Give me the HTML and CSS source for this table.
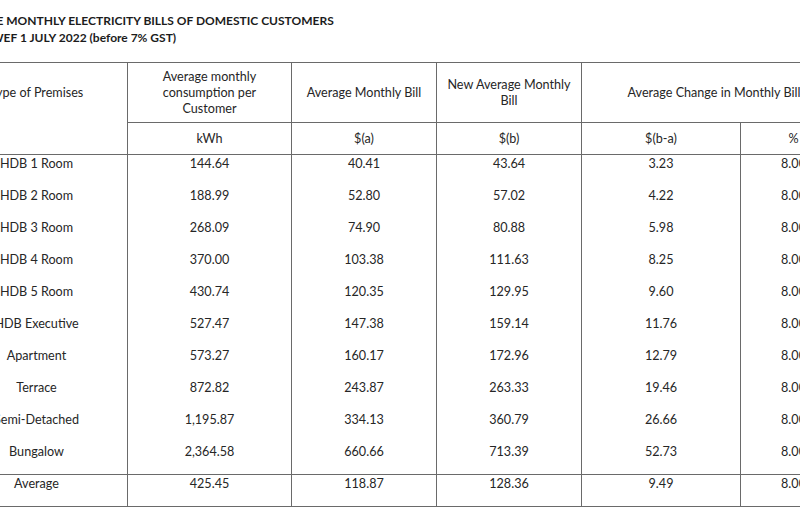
FILE: index.html
```html
<!DOCTYPE html>
<html lang="en">
<head>
<meta charset="utf-8">
<title>Average Monthly Electricity Bills</title>
<link rel="stylesheet" href="styles.css">
</head>
<body>
<div class="doc">
  <div class="title">
    <div class="t1">AVERAGE MONTHLY ELECTRICITY BILLS OF DOMESTIC CUSTOMERS</div>
    <div class="t2">WEF 1 JULY 2022 (before 7% GST)</div>
  </div>
  <table class="bills">
    <colgroup>
      <col class="c1"><col class="c2"><col class="c3"><col class="c4"><col class="c5"><col class="c6">
    </colgroup>
    <thead>
      <tr class="h1">
        <th rowspan="2" class="type">Type of Premises</th>
        <th>Average monthly<br>consumption per<br>Customer</th>
        <th>Average Monthly Bill</th>
        <th>New Average Monthly<br>Bill</th>
        <th colspan="2">Average Change in Monthly Bill</th>
      </tr>
      <tr class="h2">
        <th>kWh</th>
        <th>$(a)</th>
        <th>$(b)</th>
        <th>$(b-a)</th>
        <th>%</th>
      </tr>
    </thead>
    <tbody>
      <tr><td>HDB 1 Room</td><td>144.64</td><td>40.41</td><td>43.64</td><td>3.23</td><td>8.00</td></tr>
      <tr><td>HDB 2 Room</td><td>188.99</td><td>52.80</td><td>57.02</td><td>4.22</td><td>8.00</td></tr>
      <tr><td>HDB 3 Room</td><td>268.09</td><td>74.90</td><td>80.88</td><td>5.98</td><td>8.00</td></tr>
      <tr><td>HDB 4 Room</td><td>370.00</td><td>103.38</td><td>111.63</td><td>8.25</td><td>8.00</td></tr>
      <tr><td>HDB 5 Room</td><td>430.74</td><td>120.35</td><td>129.95</td><td>9.60</td><td>8.00</td></tr>
      <tr><td>HDB Executive</td><td>527.47</td><td>147.38</td><td>159.14</td><td>11.76</td><td>8.00</td></tr>
      <tr><td>Apartment</td><td>573.27</td><td>160.17</td><td>172.96</td><td>12.79</td><td>8.00</td></tr>
      <tr><td>Terrace</td><td>872.82</td><td>243.87</td><td>263.33</td><td>19.46</td><td>8.00</td></tr>
      <tr><td>Semi-Detached</td><td>1,195.87</td><td>334.13</td><td>360.79</td><td>26.66</td><td>8.00</td></tr>
      <tr><td>Bungalow</td><td>2,364.58</td><td>660.66</td><td>713.39</td><td>52.73</td><td>8.00</td></tr>
      <tr class="avg"><td>Average</td><td>425.45</td><td>118.87</td><td>128.36</td><td>9.49</td><td>8.00</td></tr>
    </tbody>
  </table>
</div>
</body>
</html>
```
FILE: styles.css
```css
html, body {
  margin: 0;
  padding: 0;
  background: #ffffff;
  overflow: hidden;
}

body {
  width: 800px;
  height: 517px;
  font-family: Lato, "Open Sans", "Liberation Sans", sans-serif;
  color: #262626;
}

.doc {
  margin-left: -55px;
  width: 901px;
}

.title {
  padding-top: 12px;
  font-weight: bold;
  font-size: 12px;
  line-height: 17px;
  color: #1c1c1c;
}

.title .t1 {
  margin-left: 4px;
}

.title .t2 {
  margin-left: 46px;
}

.bills {
  margin-top: 16px;
  border-collapse: collapse;
  table-layout: fixed;
  width: 901px;
  font-size: 12.6px;
  line-height: 16px;
}

.bills .c1 { width: 182px; }
.bills .c2 { width: 164px; }
.bills .c3 { width: 145px; }
.bills .c4 { width: 145px; }
.bills .c5 { width: 159px; }
.bills .c6 { width: 106px; }

.bills th,
.bills td {
  border: 1.5px solid #6a6a6a;
  text-align: center;
  padding: 0 3px;
  white-space: nowrap;
}

.bills th {
  font-weight: normal;
  vertical-align: middle;
}

.bills th.type {
  vertical-align: top;
  padding-top: 22px;
}

.bills tbody td {
  border-top: none;
  border-bottom: none;
  vertical-align: top;
  height: 32px;
  padding-top: 1px;
  box-sizing: border-box;
}

.bills .h1 th {
  height: 60px;
  box-sizing: border-box;
}

.bills .h2 th {
  height: 32px;
  box-sizing: border-box;
}

.bills tr.avg td {
  border-top: 1.5px solid #6a6a6a;
  border-bottom: 1.5px solid #6a6a6a;
}
```
